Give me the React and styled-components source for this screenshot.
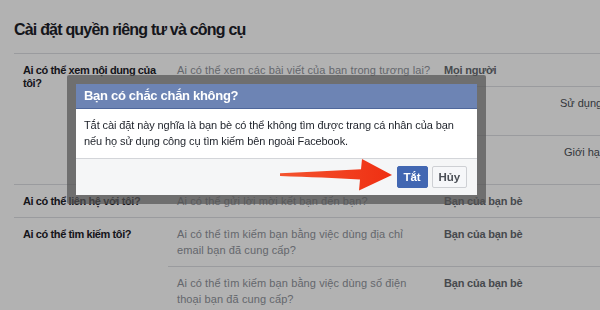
import styled, { createGlobalStyle } from "styled-components";

const GlobalStyle = createGlobalStyle`
  html, body {
    margin: 0;
    padding: 0;
    background: #ffffff;
    overflow: hidden;
  }
  body {
    font-family: "Liberation Sans", Arial, sans-serif;
    color: #1d2129;
  }
`;

const settings = [
  {
    label: "Ai có thể xem nội dung của tôi?",
    items: [
      {
        question: "Ai có thể xem các bài viết của bạn trong tương lai?",
        value: "Mọi người",
      },
      {
        question: "Xem lại tất cả bài viết và những nội dung bạn được gắn thẻ",
        action: "Sử dụng Nhật ký hoạt động",
      },
      {
        question:
          "Giới hạn người xem bài viết bạn đã chia sẻ với bạn của bạn bè hoặc Công khai?",
        action: "Giới hạn bài viết cũ",
        shift: 4,
      },
    ],
  },
  {
    label: "Ai có thể liên hệ với tôi?",
    items: [
      {
        question: "Ai có thể gửi lời mời kết bạn đến bạn?",
        value: "Bạn của bạn bè",
      },
    ],
  },
  {
    label: "Ai có thể tìm kiếm tôi?",
    items: [
      {
        question:
          "Ai có thể tìm kiếm bạn bằng việc dùng địa chỉ email bạn đã cung cấp?",
        value: "Bạn của bạn bè",
      },
      {
        question:
          "Ai có thể tìm kiếm bạn bằng việc dùng số điện thoại bạn đã cung cấp?",
        value: "Bạn của bạn bè",
      },
    ],
  },
];

function App() {
  return (
    <>
      <GlobalStyle />
      <Page>
        <Title>Cài đặt quyền riêng tư và công cụ</Title>
        {settings.map((section) => (
          <Section key={section.label}>
            <Label>{section.label}</Label>
            <SubList>
              {section.items.map((item) => (
                <SubRow key={item.question}>
                  <Question>{item.question}</Question>
                  <Value>{item.value}</Value>
                  <Action $shift={item.shift || 0}>{item.action}</Action>
                </SubRow>
              ))}
            </SubList>
          </Section>
        ))}
      </Page>

      <Overlay />

      <Dialog>
        <DialogHeader>Bạn có chắc chắn không?</DialogHeader>
        <DialogBody>
          Tắt cài đặt này nghĩa là bạn bè có thể không tìm được trang cá nhân
          của bạn nếu họ sử dụng công cụ tìm kiếm bên ngoài Facebook.
        </DialogBody>
        <DialogFooter>
          <Button $primary>Tắt</Button>
          <Button>Hủy</Button>
        </DialogFooter>
      </Dialog>

      <Arrow viewBox="0 0 600 310" width="600" height="310">
        <defs>
          <linearGradient id="arrowFill" x1="0" y1="0" x2="1" y2="0">
            <stop offset="0" stopColor="#f4542f" />
            <stop offset="1" stopColor="#ef2f12" />
          </linearGradient>
        </defs>
        <path
          d="M280 173.2 C310 172 335 170.5 361 169.2 L362 159 L392 175 L359 190.5 L360 179.5 C335 178 310 177 280 176 Z"
          fill="url(#arrowFill)"
        />
      </Arrow>
    </>
  );
}

const Page = styled.div`
  width: 760px;
  padding-left: 14px;
`;

const Title = styled.h1`
  margin: 0;
  padding: 20px 0 13px;
  font-size: 16px;
  line-height: 20px;
  font-weight: 700;
  letter-spacing: -0.8px;
  color: #1d2129;
  border-bottom: 1px solid #dddfe2;
`;

const Section = styled.div`
  display: flex;
  border-bottom: 1px solid #dddfe2;
  &:last-child {
    border-bottom: none;
  }
`;

const Label = styled.div`
  width: 142px;
  flex-shrink: 0;
  padding: 10px 3px 0 9px;
  font-size: 11px;
  line-height: 12.5px;
  font-weight: 700;
  letter-spacing: -0.4px;
  color: #1d2129;
`;

const SubList = styled.div`
  flex: 1;
  display: flex;
  flex-direction: column;
`;

const SubRow = styled.div`
  display: grid;
  grid-template-columns: 276px 116px 1fr;
  padding: 8px 0;
  font-size: 11px;
  line-height: 16px;
  & + & {
    border-top: 1px solid #dddfe2;
  }
`;

const Question = styled.div`
  padding: 0 13px 0 9px;
  color: #90949c;
  letter-spacing: 0.1px;
`;

const Value = styled.div`
  color: #4b4f56;
  font-weight: 700;
  letter-spacing: -0.2px;
  opacity: 0.85;
`;

const Action = styled.div`
  padding-left: ${(p) => p.$shift}px;
  color: #4b4f56;
  white-space: nowrap;
`;

const Overlay = styled.div`
  position: fixed;
  inset: 0;
  background: rgba(0, 0, 0, 0.3);
`;

const Dialog = styled.div`
  position: absolute;
  left: 67px;
  top: 75px;
  width: 401px;
  border: 9px solid rgba(82, 82, 82, 0.7);
  border-radius: 2px;
  background: #ffffff;
  background-clip: padding-box;
  font-size: 11px;
`;

const DialogHeader = styled.div`
  height: 24px;
  line-height: 24px;
  padding: 0 8px;
  background: #6d84b4;
  border-bottom: 1px solid #4f679b;
  color: #ffffff;
  font-size: 13px;
  font-weight: 700;
  letter-spacing: -0.3px;
`;

const DialogBody = styled.div`
  padding: 8px 8px 9px;
  line-height: 16px;
  letter-spacing: -0.1px;
  color: #1d2129;
  border-bottom: 1px solid #d3d5d9;
`;

const DialogFooter = styled.div`
  display: flex;
  justify-content: flex-end;
  gap: 4px;
  padding: 7px 10px 7px;
  background: #f5f6f7;
`;

const Button = styled.button`
  height: 22px;
  min-width: 31px;
  padding: 0 6px;
  border-radius: 2px;
  font-family: inherit;
  font-size: 11.5px;
  font-weight: 700;
  letter-spacing: -0.1px;
  border: 1px solid ${(p) => (p.$primary ? "#4267b2" : "#ced0d4")};
  background: ${(p) => (p.$primary ? "#4267b2" : "#f6f7f9")};
  color: ${(p) => (p.$primary ? "#ffffff" : "#4b4f56")};
`;

const Arrow = styled.svg`
  position: absolute;
  left: 0;
  top: 0;
  pointer-events: none;
`;

export default App;
